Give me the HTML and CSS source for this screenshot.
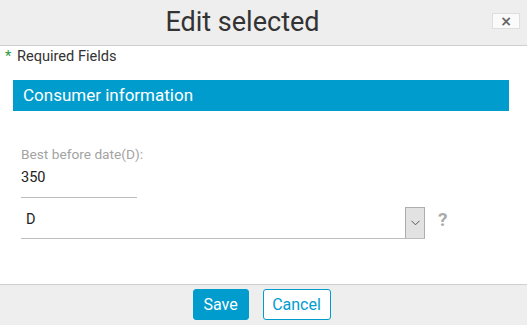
FILE: index.html
```html
<!DOCTYPE html>
<html>
<head>
<meta charset="utf-8">
<link rel="stylesheet" href="styles.css">
</head>
<body>
<div class="dialog">
  <div class="header">
    <h1 class="title">Edit selected</h1>
    <button class="close" type="button">×</button>
  </div>
  <div class="body">
    <div class="required"><span class="star">*</span> Required Fields</div>
    <div class="section">Consumer information</div>
    <div class="fields">
      <label class="label">Best before date(D):</label>
      <div class="input">350</div>
      <div class="select-row">
        <div class="select">
          <span class="select-value">D</span>
          <span class="arrow">
            <svg width="9" height="6" viewBox="0 0 9 6"><path d="M0.5 0.8 L4.5 4.8 L8.5 0.8" fill="none" stroke="#555" stroke-width="1"/></svg>
          </span>
        </div>
        <span class="help">?</span>
      </div>
    </div>
  </div>
  <div class="footer">
    <button class="btn btn-primary" type="button">Save</button>
    <button class="btn btn-outline" type="button">Cancel</button>
  </div>
</div>
</body>
</html>
```
FILE: styles.css
```css
* { box-sizing: border-box; }
html, body { margin: 0; padding: 0; }
body {
  font-family: Roboto, "Liberation Sans", sans-serif;
  background: #fff;
  width: 527px;
  height: 325px;
  overflow: hidden;
}
.dialog {
  display: flex;
  flex-direction: column;
  height: 325px;
}
.header {
  height: 46px;
  background: #eeeeee;
  border-bottom: 1px solid #cfcfcf;
  display: flex;
  align-items: center;
  justify-content: center;
  position: relative;
}
.title {
  margin: 0;
  font-weight: 400;
  font-size: 27px;
  color: #333;
  line-height: 30px;
  margin-right: 42px;
  margin-top: -2px;
}
.close {
  position: absolute;
  right: 7px;
  top: 13px;
  width: 28px;
  height: 16px;
  padding: 0;
  background: #fafafa;
  border: 1px solid #dedede;
  color: #666;
  font-family: "DejaVu Sans", sans-serif;
  font-size: 14px;
  font-weight: bold;
  line-height: 13px;
}
.body {
  flex: 1;
  padding: 0 18px 0 13px;
}
.required {
  font-size: 14.6px;
  color: #333;
  margin-top: 1px;
  line-height: 18px;
  margin-left: -8px;
}
.star { color: #2e9b3f; margin-right: 2px; }
.section {
  margin-top: 15px;
  height: 31px;
  background: #009ccd;
  color: #fff;
  font-size: 17px;
  line-height: 31px;
  padding-left: 10px;
}
.fields {
  padding-left: 8px;
  padding-top: 34px;
}
.label {
  display: block;
  font-size: 13.7px;
  color: #a3a3a3;
  line-height: 18px;
}
.input {
  width: 116px;
  font-size: 14.5px;
  color: #222;
  line-height: 18px;
  padding-top: 6px;
  padding-bottom: 10px;
  border-bottom: 1px solid #bdbdbd;
}
.select-row {
  display: flex;
  align-items: flex-start;
  margin-top: 9px;
}
.select {
  width: 404px;
  height: 32px;
  border-bottom: 1px solid #bdbdbd;
  display: flex;
  justify-content: space-between;
}
.select-value {
  font-size: 14.5px;
  color: #222;
  padding-left: 5px;
  line-height: 26px;
}
.arrow {
  width: 20px;
  height: 31px;
  background: #e2e2e2;
  border: 1px solid #adadad;
  border-bottom: none;
  display: flex;
  align-items: center;
  justify-content: center;
}
.help {
  margin-left: 13px;
  font-size: 19px;
  font-weight: bold;
  color: #aaa;
  line-height: 20px;
  margin-top: 3px;
}
.footer {
  height: 41px;
  background: #eeeeee;
  border-top: 1px solid #cfcfcf;
  display: flex;
  justify-content: center;
  align-items: flex-start;
  gap: 14px;
  padding-top: 4px;
  padding-right: 4px;
}
.btn {
  height: 31px;
  font-family: Roboto, "Liberation Sans", sans-serif;
  font-size: 16px;
  border-radius: 3px;
  padding: 0;
  line-height: 29px;
}
.btn-primary {
  width: 56px;
  background: #009ccd;
  border: 1px solid #009ccd;
  color: #fff;
}
.btn-outline {
  width: 68px;
  background: #fff;
  border: 1px solid #009ccd;
  color: #009ccd;
}
```
